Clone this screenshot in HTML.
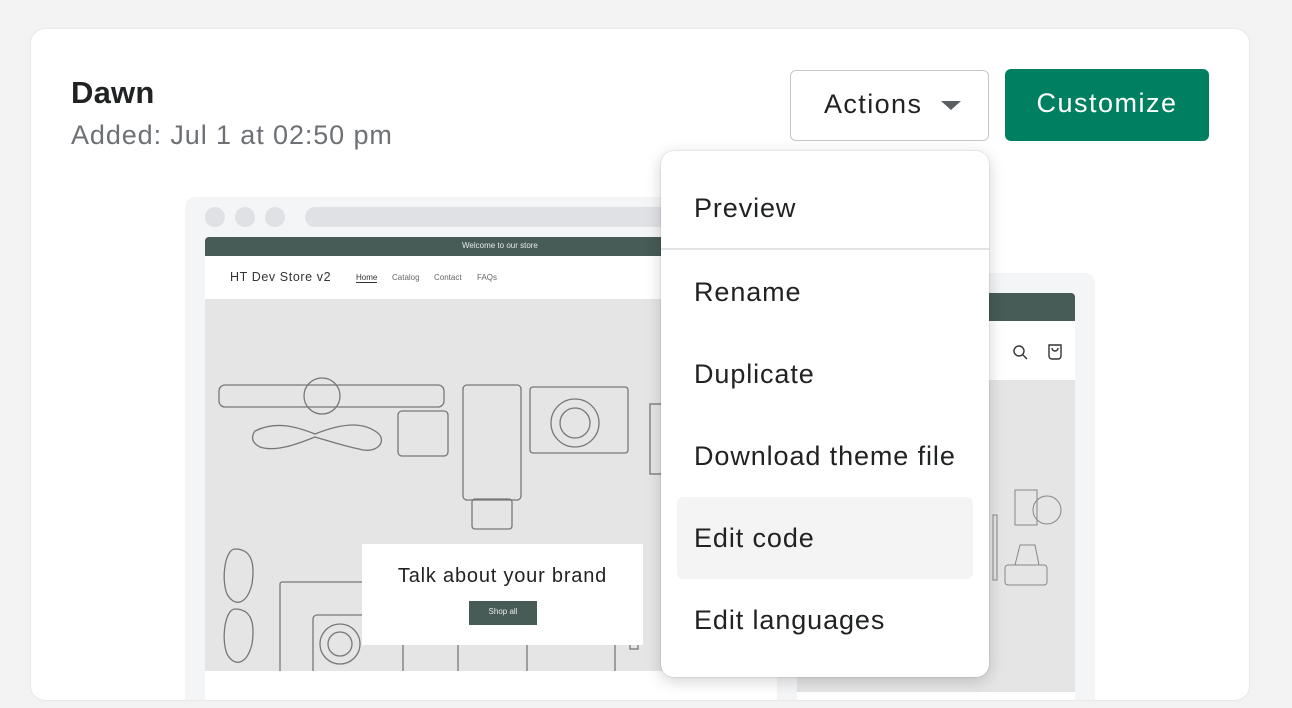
<!DOCTYPE html>
<html><head><meta charset="utf-8"><style>
*{margin:0;padding:0;box-sizing:border-box}
body{width:1292px;height:708px;background:#f3f3f3;font-family:"Liberation Sans",sans-serif;position:relative;overflow:hidden;color:#202223}
.abs{position:absolute}
.card{left:31px;top:29px;width:1218px;height:671px;background:#fff;border-radius:14px;box-shadow:0 0 2px rgba(0,0,0,.12);overflow:hidden}
.t{white-space:nowrap}
.item{position:absolute;left:33px;font-size:27px;letter-spacing:0.9px;color:#202223}
</style></head><body>
<div class="abs card">
<div style="position:absolute;left:-31px;top:-29px;width:1292px;height:708px">
<div class="abs" style="left:185px;top:197px;width:600px;height:520px;background:#f4f5f7;border-radius:10px"></div>
<div class="abs" style="left:205px;top:207px;width:20px;height:20px;border-radius:50%;background:#dfe1e5"></div>
<div class="abs" style="left:235px;top:207px;width:20px;height:20px;border-radius:50%;background:#dfe1e5"></div>
<div class="abs" style="left:265px;top:207px;width:20px;height:20px;border-radius:50%;background:#dfe1e5"></div>
<div class="abs" style="left:305px;top:207px;width:400px;height:20px;border-radius:10px;background:#dfe1e5"></div>
<div class="abs" style="left:205px;top:237px;width:580px;height:19px;background:#475b57;border-radius:4px 4px 0 0"></div>
<div class="abs t" style="left:462px;top:241px;font-size:8px;color:#e8eceb">Welcome to our store</div>
<div class="abs" style="left:205px;top:256px;width:580px;height:43px;background:#fff"></div>
<div class="abs t" style="left:230px;top:270px;font-size:12.5px;letter-spacing:.6px;color:#333">HT Dev Store v2</div>
<div class="abs t" style="left:356px;top:273px;font-size:8px;color:#333;border-bottom:1px solid #333">Home</div>
<div class="abs t" style="left:392px;top:273px;font-size:8px;color:#666">Catalog</div>
<div class="abs t" style="left:434px;top:273px;font-size:8px;color:#666">Contact</div>
<div class="abs t" style="left:477px;top:273px;font-size:8px;color:#666">FAQs</div>
<div class="abs" style="left:205px;top:299px;width:580px;height:372px;background:#e5e5e5"></div>
<svg class="abs" style="left:205px;top:299px" width="460" height="372" fill="none" stroke="#777" stroke-width="1.3">
<rect x="14" y="86" width="225" height="22" rx="6"/><circle cx="117" cy="97" r="18"/>
<path d="M50 132c20-10 40-5 60 3 30-12 50-12 64 0 8 10-5 20-20 15-15-3-30-8-44-12-20 8-40 15-55 10-10-5-8-12-5-16z"/>
<rect x="193" y="112" width="50" height="45" rx="4"/>
<rect x="258" y="86" width="58" height="115" rx="4"/><rect x="267" y="200" width="40" height="30" rx="3"/>
<rect x="325" y="88" width="98" height="66" rx="3"/><circle cx="370" cy="124" r="24"/><circle cx="370" cy="124" r="15"/>
<path d="M30 250c-10 0-14 30-8 45 8 14 20 10 25-10 3-20 0-35-17-35zM30 310c-10 0-14 30-8 45 8 14 20 10 25-10 3-20 0-35-17-35z"/>
<rect x="75" y="283" width="178" height="120" rx="2"/><rect x="108" y="316" width="90" height="65" rx="4"/><circle cx="135" cy="345" r="20"/><circle cx="135" cy="345" r="12"/>
<rect x="322" y="272" width="88" height="120" rx="4"/><rect x="415" y="265" width="10" height="80"/><rect x="425" y="290" width="8" height="60"/>
<rect x="445" y="105" width="15" height="70"/>
</svg>
<div class="abs" style="left:362px;top:544px;width:281px;height:101px;background:#fff"></div>
<div class="abs t" style="left:362px;top:565px;width:281px;text-align:center;font-size:20px;letter-spacing:.8px;color:#222">Talk about your brand</div>
<div class="abs" style="left:469px;top:601px;width:68px;height:24px;background:#475b57"></div>
<div class="abs t" style="left:469px;top:607px;width:68px;text-align:center;font-size:8px;color:#e8eceb">Shop all</div>
<div class="abs" style="left:205px;top:671px;width:572px;height:40px;background:#fff"></div>
<div class="abs" style="left:777px;top:273px;width:318px;height:440px;background:#f4f5f7;border-radius:10px"></div>
<div class="abs" style="left:797px;top:293px;width:278px;height:28px;background:#475b57;border-radius:4px 4px 0 0"></div>
<div class="abs" style="left:797px;top:321px;width:278px;height:59px;background:#fff"></div>
<svg class="abs" style="left:1010px;top:342px" width="60" height="20" fill="none" stroke="#333" stroke-width="1.4"><circle cx="9" cy="9" r="5"/><path d="M13 13l4 4"/><path d="M39 3h12v11a3 3 0 0 1-3 3h-6a3 3 0 0 1-3-3z"/><path d="M42 6a3 3 0 0 0 6 0"/></svg>
<div class="abs" style="left:797px;top:380px;width:278px;height:312px;background:#e5e5e5"></div>
<svg class="abs" style="left:985px;top:480px" width="90" height="110" fill="none" stroke="#888" stroke-width="1"><circle cx="62" cy="30" r="14"/><rect x="30" y="10" width="22" height="35"/><rect x="20" y="85" width="42" height="20" rx="3"/><path d="M35 65h15l4 20H30z"/><rect x="8" y="35" width="4" height="65"/></svg>
<div class="abs" style="left:797px;top:692px;width:278px;height:20px;background:#fff"></div>
</div>
</div>
<div class="abs t" style="left:71px;top:75px;font-size:31px;letter-spacing:.2px;font-weight:bold">Dawn</div>
<div class="abs t" style="left:71px;top:120px;font-size:27px;letter-spacing:0.9px;color:#6d7175">Added: Jul 1 at 02:50 pm</div>

<div class="abs" style="left:790px;top:70px;width:199px;height:71px;border:1.5px solid #c4c7ca;border-radius:6px;background:#fff"></div>
<div class="abs t" style="left:824px;top:89px;font-size:27px;letter-spacing:1.4px">Actions</div>
<div class="abs" style="left:941px;top:101px;width:0;height:0;border-left:10px solid transparent;border-right:10px solid transparent;border-top:9px solid #5c5f62"></div>
<div class="abs" style="left:1005px;top:69px;width:204px;height:72px;background:#008060;border-radius:6px"></div>
<div class="abs t" style="left:1005px;top:88px;width:204px;text-align:center;font-size:27px;letter-spacing:1.5px;color:#fff">Customize</div>

<div class="abs" style="left:661px;top:151px;width:328px;height:526px;background:#fff;border-radius:13px;box-shadow:0 0 0 1px rgba(0,0,0,.06),0 4px 16px rgba(0,0,0,.18)">
  <div class="item t" style="top:42px">Preview</div>
  <div class="abs" style="left:0;top:97px;width:328px;height:1.5px;background:#e1e3e5"></div>
  <div class="item t" style="top:126px">Rename</div>
  <div class="item t" style="top:208px">Duplicate</div>
  <div class="item t" style="top:290px">Download theme file</div>
  <div class="abs" style="left:16px;top:346px;width:296px;height:82px;background:#f4f4f4;border-radius:6px"></div>
  <div class="item t" style="top:372px">Edit code</div>
  <div class="item t" style="top:454px">Edit languages</div>
</div>
</body></html>
